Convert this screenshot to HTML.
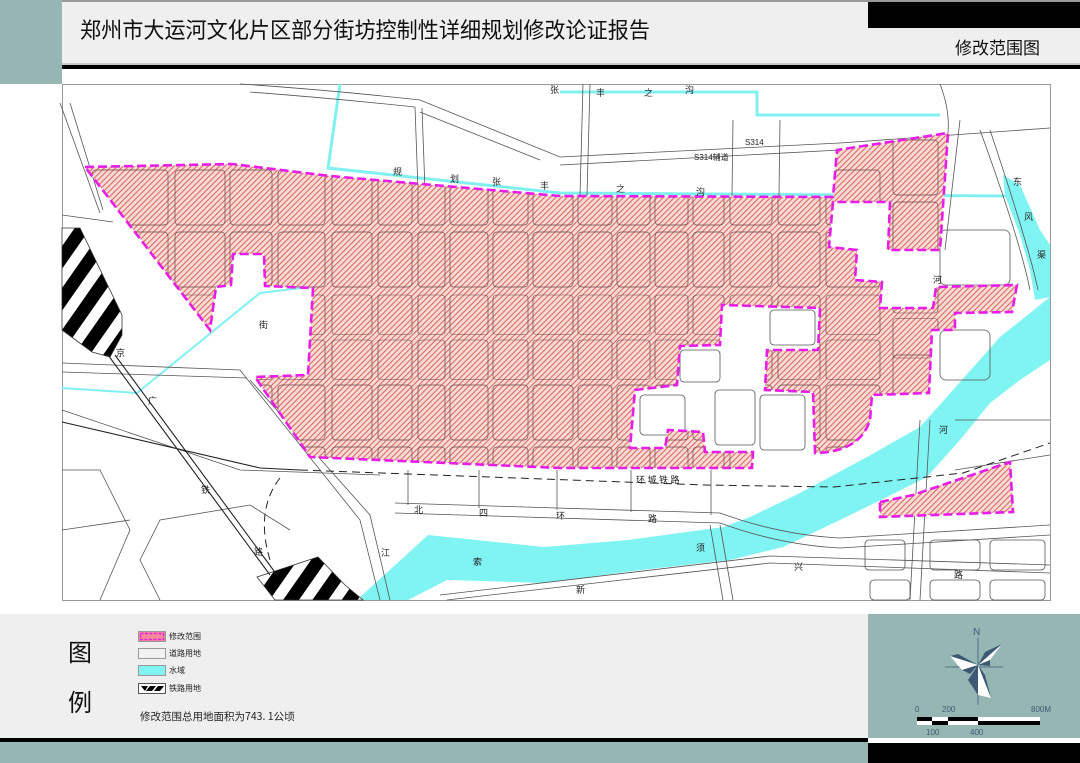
<!DOCTYPE html>
<html><head><meta charset="utf-8"><style>
html,body{margin:0;padding:0;background:#fff;}
svg{display:block;}
text{font-family:"Liberation Sans","Noto Sans CJK SC",sans-serif;}
</style></head><body>
<svg width="1080" height="763" viewBox="0 0 1080 763" xmlns="http://www.w3.org/2000/svg">
<defs>
<pattern id="hatch" width="4" height="4" patternUnits="userSpaceOnUse" patternTransform="rotate(45)">
<rect width="4" height="4" fill="#f7dcd6"/><rect x="0" y="0" width="1.1" height="4" fill="#dc6a66"/>
</pattern>
<pattern id="rail" width="24" height="24" patternUnits="userSpaceOnUse" patternTransform="rotate(35)">
<rect width="24" height="24" fill="#fff"/><rect width="13" height="24" fill="#000"/>
</pattern>
<clipPath id="pinkclip"><path id="pinkd" d="M85,167 L232,164 L330,176 L560,196 L833,197 L837,150 L948,133 L940,250 L888,250 L890,202 L833,202 L829,247 L857,250 L855,280 L882,282 L880,308 L933,308 L936,287 L1017,285 L1012,312 L955,313 L955,330 L932,330 L929,393 L872,395 L870,420 Q860,452 815,453 L813,392 L765,390 L767,350 L818,350 L820,308 L722,305 L720,345 L680,346 L677,385 L635,390 L630,448 L665,448 L668,430 L703,432 L705,452 L753,452 L752,468 L560,468 L310,457 L255,377 L308,375 L313,288 L265,286 L264,254 L233,254 L231,285 L216,287 L210,330 Z"/></clipPath>
</defs>

<rect x="0" y="0" width="1080" height="2" fill="#9a9a9a"/>
<rect x="62" y="2" width="1018" height="63" fill="#efefef"/>
<rect x="0" y="0" width="62" height="84" fill="#96b5b3"/>
<rect x="868" y="2" width="212" height="26" fill="#000"/>
<rect x="62" y="63" width="1018" height="2" fill="#c8c8c8"/>
<rect x="62" y="65" width="1018" height="4" fill="#000"/>
<text x="80" y="38" font-size="22" fill="#111" style="font-family:'Noto Sans CJK SC',sans-serif" textLength="570" lengthAdjust="spacingAndGlyphs">郑州市大运河文化片区部分街坊控制性详细规划修改论证报告</text>
<text x="955" y="54" font-size="17" fill="#111" style="font-family:'Noto Sans CJK SC',sans-serif">修改范围图</text>

<rect x="62.5" y="84.5" width="988" height="516" fill="#fff" stroke="#999" stroke-width="1"/>

<g fill="#80f4f2">
<path d="M357,600 L428,535 L544,547 L628,540 L724,527 L750,517 L800,493 L867,457 L920,427 L953,390 L1000,337 L1050,297 L1050,360 L1020,380 L990,403 L960,440 L927,477 L887,497 L840,520 L783,547 L730,560 L641,570 L544,583 L447,580 L408,600 Z"/>
<path d="M1003,175 L1020,185 L1040,230 L1050,245 L1050,297 L1035,300 L1030,270 L1020,235 L1005,195 Z"/>
</g>
<g fill="none" stroke="#80f0f0" stroke-width="3">
<path d="M340,84 L328,168 L560,193 L1007,196"/>
<path d="M560,92 L757,92 L757,115 L940,115"/>
</g>
<g fill="none" stroke="#80f0f0" stroke-width="2">
<path d="M327,177 L310,287 L260,293 L137,393 L62,388"/>
</g>

<g fill="none" stroke="#555" stroke-width="0.8">
<path d="M60,103 L100,213"/><path d="M70,103 L103,210"/>
<path d="M62,215 L113,222"/>
<path d="M240,84 Q330,90 420,100 L560,157 L840,143 L1050,128"/>
<path d="M250,92 Q330,98 415,107"/>
<path d="M560,165 L840,150"/>
<path d="M420,112 L540,160"/>
<path d="M583,84 L580,196"/><path d="M590,84 L587,196"/>
<path d="M733,120 L732,196"/><path d="M780,120 L779,196"/>
<path d="M415,107 L418,190"/><path d="M422,108 L425,190"/>
<path d="M940,84 Q950,110 948,133"/><path d="M960,120 L945,250"/>
<path d="M980,130 Q1020,240 1030,290"/><path d="M990,130 Q1030,250 1038,290"/>
<path d="M62,363 L240,370"/><path d="M62,372 L247,378"/>
<path d="M62,410 Q150,440 240,470 L380,475"/>
<path d="M395,513 L720,523 Q780,545 840,548 L1050,535"/>
<path d="M395,503 L720,513 Q780,535 840,538 L1050,525"/>
<path d="M447,600 L770,563 L1050,573"/><path d="M440,595 L770,556 L1050,565"/>
<path d="M408,470 L408,505"/><path d="M479,470 L479,508"/><path d="M557,470 L557,510"/><path d="M631,470 L631,512"/><path d="M711,470 L711,515"/>
<path d="M720,525 L733,600"/><path d="M710,525 L723,600"/>
<path d="M920,420 L910,600"/><path d="M930,420 L920,600"/>
<path d="M240,370 L360,520 L380,600"/><path d="M250,380 L370,515 L390,600"/>
<path d="M62,470 L100,470 L130,530 L100,600"/>
<path d="M160,600 L140,560 L160,520 L250,505 L290,530"/>
<path d="M62,530 L130,520"/>
<path d="M955,420 L1050,420"/><path d="M955,470 L1050,455"/>
</g>
<g fill="none" stroke="#555" stroke-width="0.8">
<rect x="865" y="540" width="40" height="30" rx="4"/><rect x="930" y="540" width="50" height="30" rx="4"/><rect x="990" y="540" width="55" height="30" rx="4"/>
<rect x="870" y="580" width="40" height="20" rx="4"/><rect x="930" y="580" width="50" height="20" rx="4"/><rect x="990" y="580" width="55" height="20" rx="4"/>
<rect x="715" y="390" width="40" height="55" rx="4"/><rect x="760" y="395" width="45" height="55" rx="4"/>
<rect x="640" y="395" width="45" height="40" rx="4"/>
<rect x="770" y="310" width="45" height="35" rx="4"/><rect x="680" y="350" width="40" height="32" rx="4"/>
<rect x="940" y="230" width="70" height="55" rx="6"/><rect x="940" y="330" width="50" height="50" rx="6"/>
</g>

<use href="#pinkd" fill="url(#hatch)"/>
<g clip-path="url(#pinkclip)" fill="none" stroke="#6a4a4a" stroke-width="0.7">
<g id="row">
<rect x="92" y="170" width="76" height="55" rx="4"/><rect x="175" y="170" width="50" height="55" rx="4"/><rect x="230" y="170" width="42" height="55" rx="4"/><rect x="278" y="170" width="47" height="55" rx="4"/><rect x="332" y="170" width="40" height="55" rx="4"/><rect x="378" y="170" width="34" height="55" rx="4"/><rect x="418" y="170" width="27" height="55" rx="4"/><rect x="450" y="170" width="38" height="55" rx="4"/><rect x="493" y="170" width="35" height="55" rx="4"/><rect x="533" y="170" width="40" height="55" rx="4"/><rect x="578" y="170" width="34" height="55" rx="4"/><rect x="617" y="170" width="33" height="55" rx="4"/><rect x="655" y="170" width="33" height="55" rx="4"/><rect x="693" y="170" width="31" height="55" rx="4"/><rect x="730" y="170" width="42" height="55" rx="4"/><rect x="778" y="170" width="42" height="55" rx="4"/><rect x="826" y="170" width="54" height="55" rx="4"/><rect x="893" y="140" width="45" height="55" rx="4"/>
</g>
<use href="#row" y="62"/>
<g transform="translate(0,125)"><use href="#row" transform="translate(0,170) scale(1,0.72) translate(0,-170)"/></g>
<g transform="translate(0,170)"><use href="#row" transform="translate(0,170) scale(1,0.72) translate(0,-170)"/></g>
<use href="#row" y="215"/>
<use href="#row" y="277"/>
</g>
<use href="#pinkd" fill="none" stroke="#e61ee6" stroke-width="2.6" stroke-dasharray="9 4"/>
<path d="M880,502 L913,495 L1010,462 L1013,512 L880,517 Z" fill="url(#hatch)" stroke="#e61ee6" stroke-width="2.6" stroke-dasharray="9 4"/>

<path d="M62,228 L80,228 L122,315 L122,335 L110,357 L92,352 L62,330 Z" fill="url(#rail)" stroke="#333" stroke-width="0.8"/>
<path d="M257,577 L318,557 L345,585 L363,600 L275,600 Z" fill="url(#rail)" stroke="#333" stroke-width="0.8"/>
<g fill="none" stroke="#222" stroke-width="1.1">
<path d="M108,355 L270,575"/><path d="M115,355 L277,575"/>
<path d="M62,422 L260,468 L300,470"/>
</g>
<g fill="none" stroke="#222" stroke-width="1" stroke-dasharray="8 5">
<path d="M300,470 L705,485 L834,487 L963,473 L1050,443"/>
<path d="M280,478 Q255,510 270,560"/>
</g>

<g font-size="9" fill="#222" style="font-family:'Noto Sans CJK SC',sans-serif">
<text x="550" y="93">张</text><text x="596" y="96">丰</text><text x="644" y="96">之</text><text x="685" y="93">沟</text>
<text x="745" y="145" font-size="8">S314</text><text x="694" y="160" font-size="8">S314辅道</text>
<text x="393" y="175">规</text><text x="450" y="182">划</text><text x="492" y="185">张</text><text x="540" y="189">丰</text><text x="616" y="192">之</text><text x="696" y="195">沟</text>
<text x="636" y="483">环 城 铁 路</text>
<text x="414" y="513">北</text><text x="479" y="516">四</text><text x="556" y="519">环</text><text x="648" y="522">路</text>
<text x="473" y="565">索</text><text x="696" y="551">须</text><text x="794" y="570">兴</text><text x="954" y="578">路</text><text x="576" y="593">新</text>
<text x="381" y="556">江</text><text x="201" y="493">铁</text><text x="254" y="555">路</text><text x="148" y="404">广</text><text x="116" y="356">京</text>
<text x="1013" y="185">东</text><text x="1024" y="220">风</text><text x="1037" y="258">渠</text>
<text x="939" y="433">河</text><text x="933" y="283">河</text><text x="259" y="328">街</text>
</g>

<rect x="0" y="614" width="868" height="124" fill="#efefef"/>
<rect x="868" y="614" width="212" height="124" fill="#96b6b4"/>
<rect x="0" y="738" width="868" height="4" fill="#000"/>
<rect x="0" y="742" width="868" height="21" fill="#96b6b4"/>
<rect x="868" y="738" width="212" height="5" fill="#fff"/>
<rect x="868" y="743" width="212" height="20" fill="#000"/>
<text x="68" y="661" font-size="24" fill="#111" style="font-family:'Noto Sans CJK SC',sans-serif">图</text>
<text x="68" y="711" font-size="24" fill="#111" style="font-family:'Noto Sans CJK SC',sans-serif">例</text>
<rect x="138.5" y="631.5" width="27" height="10" fill="#f48a9a" stroke="#999"/>
<rect x="140.5" y="633.5" width="23" height="6" fill="none" stroke="#e61ee6" stroke-width="1.4" stroke-dasharray="3 1.5"/>
<rect x="138.5" y="648.5" width="27" height="10" fill="#f2f2f2" stroke="#999"/>
<rect x="138.5" y="665.5" width="27" height="10" fill="#80f4f2" stroke="#999"/>
<rect x="138.5" y="683.5" width="27" height="10" fill="#fff" stroke="#555"/>
<path d="M141,686 L148,686 L145,691 Z M150,686 L156,686 L152,691 L146,691 Z M158,686 L164,686 L160,691 L154,691 Z" fill="#000"/>
<g font-size="8" fill="#222" style="font-family:'Noto Sans CJK SC',sans-serif">
<text x="169" y="639">修改范围</text><text x="169" y="656">道路用地</text><text x="169" y="673">水域</text><text x="169" y="691">铁路用地</text>
</g>
<text x="140" y="720" font-size="10.5" fill="#222" style="font-family:'Noto Sans CJK SC',sans-serif">修改范围总用地面积为743. 1公顷</text>

<g stroke="#3c5a74" stroke-width="0.8"><line x1="978" y1="638" x2="978" y2="705"/><line x1="945" y1="667" x2="1003" y2="667"/></g>
<text x="973" y="635" font-size="10" fill="#3c5a74">N</text>
<path d="M978,665 L1002,644 L990,660 Z" fill="#fff"/><path d="M978,665 L985,652 L1002,644 Z" fill="#3c5a74"/><path d="M978,665 L990,660 L990,666 Z" fill="#3c5a74"/>
<path d="M978,665 L950,656 L958,654 Z" fill="#3c5a74"/><path d="M978,665 L950,656 L962,670 Z" fill="#fff"/><path d="M978,665 L962,670 L970,674 Z" fill="#3c5a74"/>
<path d="M978,665 L968,680 L978,695 Z" fill="#3c5a74"/><path d="M978,665 L978,695 L991,698 Z" fill="#fff"/><path d="M978,665 L991,698 L985,675 Z" fill="#3c5a74"/>
<g font-size="8" fill="#3c5a74"><text x="915" y="712">0</text><text x="942" y="712">200</text><text x="1031" y="712">800M</text><text x="926" y="735">100</text><text x="970" y="735">400</text></g>
<rect x="917" y="717" width="123" height="8" fill="#fff"/>
<rect x="917" y="717" width="15" height="4" fill="#000"/><rect x="948" y="717" width="30" height="4" fill="#000"/>
<rect x="932" y="721" width="16" height="4" fill="#000"/><rect x="978" y="721" width="62" height="4" fill="#000"/>
</svg>
</body></html>
